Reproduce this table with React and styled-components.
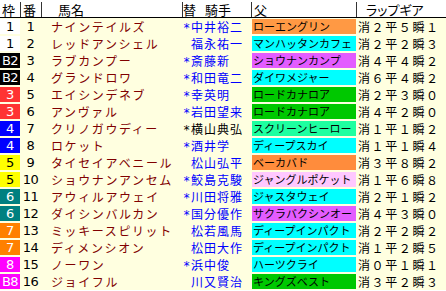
import React from "react";
import styled, { createGlobalStyle } from "styled-components";

const Global = createGlobalStyle`
  html, body { margin: 0; padding: 0; background: #ffffff; }
  body { font-family: "Noto Sans CJK JP", "Noto Sans", sans-serif; }
`;

const COLS = "20px 21px 141px 69px 105px 90px";

const Table = styled.div`
  width: 446px;
  display: flex;
  flex-direction: column;
  background: #ffffe0;
`;

const HeaderRow = styled.div`
  display: grid;
  grid-template-columns: ${COLS};
  height: 17px;
  background: #ffffff;
  border-bottom: 1px solid #000000;
`;

const HeadCell = styled.div`
  display: flex;
  align-items: center;
  gap: ${(p) => p.$gap || 0}px;
  padding-left: ${(p) => p.$pad || 0}px;
  margin-top: 2px;
  font-size: 13px;
  line-height: 1;
  color: #000000;
  font-feature-settings: ${(p) => (p.$palt ? '"palt"' : "normal")};
  border-left: ${(p) => (p.$first ? "none" : "1px solid #333333")};
  white-space: nowrap;
`;

const Row = styled.div`
  display: grid;
  grid-template-columns: ${COLS};
  height: 17px;
  align-items: stretch;
`;

const FrameCell = styled.div`
  margin: 1px 0;
  background: ${(p) => p.$bg};
  color: ${(p) => p.$fg};
  font-family: "DejaVu Sans", "Liberation Sans", sans-serif;
  font-size: 13px;
  line-height: 15px;
  text-align: center;
  letter-spacing: -0.5px;
`;

const NumCell = styled.div`
  font-family: "DejaVu Sans", "Liberation Sans", sans-serif;
  font-size: 13px;
  line-height: 17px;
  text-align: center;
  color: #000000;
  letter-spacing: -0.5px;
`;

const NameCell = styled.div`
  padding-left: 10px;
  font-size: 12px;
  line-height: 17px;
  letter-spacing: 1.6px;
  color: #800000;
  white-space: nowrap;
  overflow: hidden;
`;

const JockeyCell = styled.div`
  display: flex;
  align-items: center;
  padding-left: 1px;
  font-size: 12px;
  line-height: 17px;
  letter-spacing: 1px;
  color: ${(p) => p.$color};
  white-space: nowrap;
  overflow: hidden;
`;

const Mark = styled.span`
  display: inline-block;
  width: 8px;
  font-family: "DejaVu Sans Mono", monospace;
  font-size: 12px;
  letter-spacing: 0;
  vertical-align: -3px;
  transform: translateY(2px);
`;

const SireCell = styled.div`
  margin: 1px 0 1px 1px;
  padding-left: 1px;
  background: ${(p) => p.$bg};
  color: #000000;
  font-size: 11px;
  line-height: 15px;
  white-space: nowrap;
  overflow: hidden;
`;

const LapCell = styled.div`
  padding-left: 2px;
  font-size: 12px;
  line-height: 17px;
  letter-spacing: 1.6px;
  color: #000000;
  white-space: nowrap;
  overflow: hidden;
`;

const FRAME = {
  "1": ["#ffffff", "#000000"],
  B2: ["#000000", "#ffffff"],
  "3": ["#ff3333", "#ffffff"],
  "4": ["#0000ff", "#ffffff"],
  "5": ["#ffff00", "#000000"],
  "6": ["#008080", "#ffffff"],
  "7": ["#ff8000", "#ffffff"],
  "8": ["#ff00ff", "#ffffff"],
  B8: ["#ff00ff", "#ffffff"],
};

const SIRE = {
  orange: "#ff9944",
  orange2: "#ff8c3c",
  cyan: "#00ffff",
  violet: "#e35cff",
  green: "#00c800",
  mint: "#1effa0",
  pink: "#ffc8ff",
};

const rows = [
  ["1", 1, "ナインテイルズ", "*", "中井裕二", "b", "ローエングリン", "orange", "消２平５瞬１"],
  ["1", 2, "レッドアンシェル", "", "福永祐一", "b", "マンハッタンカフェ", "cyan", "消２平２瞬３"],
  ["B2", 3, "ラブカンプー", "*", "斎藤新", "b", "ショウナンカンプ", "violet", "消４平４瞬２"],
  ["B2", 4, "グランドロワ", "*", "和田竜二", "b", "ダイワメジャー", "cyan", "消６平４瞬２"],
  ["3", 5, "エイシンデネブ", "*", "幸英明", "b", "ロードカナロア", "green", "消２平３瞬０"],
  ["3", 6, "アンヴァル", "*", "岩田望来", "b", "ロードカナロア", "green", "消４平２瞬０"],
  ["4", 7, "クリノガウディー", "*", "横山典弘", "k", "スクリーンヒーロー", "mint", "消１平１瞬２"],
  ["4", 8, "ロケット", "*", "酒井学", "b", "ディープスカイ", "cyan", "消１平１瞬４"],
  ["5", 9, "タイセイアベニール", "", "松山弘平", "b", "ベーカバド", "orange2", "消３平８瞬２"],
  ["5", 10, "ショウナンアンセム", "*", "鮫島克駿", "b", "ジャングルポケット", "pink", "消１平６瞬８"],
  ["6", 11, "アウィルアウェイ", "*", "川田将雅", "b", "ジャスタウェイ", "cyan", "消２平１瞬２"],
  ["6", 12, "ダイシンバルカン", "*", "国分優作", "b", "サクラバクシンオー", "violet", "消４平３瞬０"],
  ["7", 13, "ミッキースピリット", "", "松若風馬", "b", "ディープインパクト", "cyan", "消２平２瞬２"],
  ["7", 14, "ディメンシオン", "", "松田大作", "b", "ディープインパクト", "cyan", "消１平２瞬５"],
  ["8", 15, "ノーワン", "*", "浜中俊", "b", "ハーツクライ", "cyan", "消０平１瞬１"],
  ["B8", 16, "ジョイフル", "", "川又賢治", "b", "キングズベスト", "green", "消３平２瞬３"],
];

export default function App() {
  return (
    <>
      <Global />
      <Table>
        <HeaderRow>
          <HeadCell $first $pad={2}>枠</HeadCell>
          <HeadCell $pad={2}>番</HeadCell>
          <HeadCell $pad={16} $gap={0}>馬名</HeadCell>
          <HeadCell $pad={0} $gap={9}>
            <span>替</span>
            <span>騎手</span>
          </HeadCell>
          <HeadCell $pad={2}>父</HeadCell>
          <HeadCell $pad={9} $palt>ラップギア</HeadCell>
        </HeaderRow>
        {rows.map(([f, n, name, mark, jockey, jc, sire, sc, lap]) => (
          <Row key={n}>
            <FrameCell $bg={FRAME[f][0]} $fg={FRAME[f][1]}>
              {f}
            </FrameCell>
            <NumCell>{n}</NumCell>
            <NameCell>{name}</NameCell>
            <JockeyCell $color={jc === "k" ? "#000000" : "#0000ff"}>
              <Mark>{mark}</Mark>
              {jockey}
            </JockeyCell>
            <SireCell $bg={SIRE[sc]}>{sire}</SireCell>
            <LapCell>{lap}</LapCell>
          </Row>
        ))}
      </Table>
    </>
  );
}
